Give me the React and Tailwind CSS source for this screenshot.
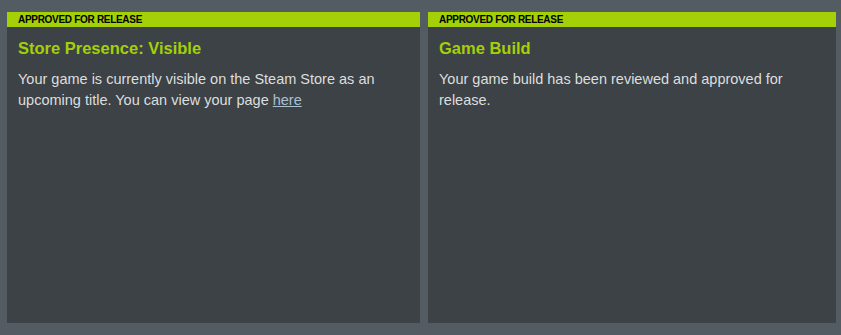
export default function App() {
  const cards = [
    {
      title: "Store Presence: Visible",
      body: (
        <>
          Your game is currently visible on the Steam Store as an upcoming title. You can view your page{" "}
          <a href="#" className="text-[#a9bfd1] underline">here</a>
        </>
      ),
      width: "w-[413px]",
    },
    {
      title: "Game Build",
      body: "Your game build has been reviewed and approved for release.",
      width: "w-[408px]",
    },
  ];

  return (
    <div className="w-[841px] h-[335px] bg-[#545c63] pt-3 pl-[7px] flex gap-2 font-['Liberation_Sans',Arial,sans-serif]">
      {cards.map((c) => (
        <div key={c.title} className={`${c.width} h-[311px] bg-[#3d4246] flex flex-col`}>
          <div className="h-[15px] bg-[#a4d007] px-[11px] text-[10px] font-bold leading-[15px] tracking-[-0.3px] text-black">
            APPROVED FOR RELEASE
          </div>
          <div className="px-[11px] pt-[11px]">
            <h2 className="text-[16.5px] font-bold leading-5 text-[#a4d007]">{c.title}</h2>
            <p className="mt-[11px] text-[14.5px] leading-[21px] text-[#dcdedf]">{c.body}</p>
          </div>
        </div>
      ))}
    </div>
  );
}
